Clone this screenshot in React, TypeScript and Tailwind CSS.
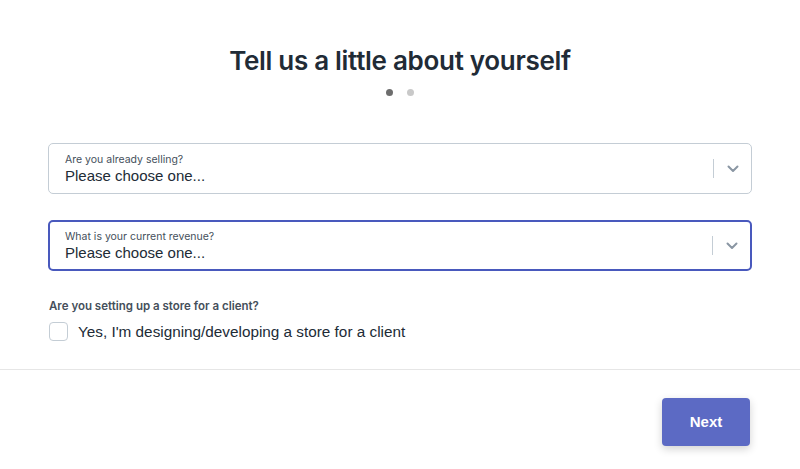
import React, { useState } from 'react';

const Chevron: React.FC = () => (
  <svg width="12" height="8" viewBox="0 0 12 8" fill="none">
    <path d="M1.5 1.5 6 6l4.5-4.5" stroke="#8a96a3" strokeWidth="2" strokeLinecap="round" strokeLinejoin="round" />
  </svg>
);

type SelectProps = { label: string; focused?: boolean };

const SelectField: React.FC<SelectProps> = ({ label, focused }) => (
  <div
    className={`flex h-[51px] items-center rounded-[5px] bg-white ${
      focused ? 'border-2 border-[#4959bd] pl-[15px]' : 'border border-[#c4cdd5] pl-4'
    }`}
  >
    <div className="flex flex-1 flex-col">
      <span className="text-[10.5px] leading-[13px] text-[#454f5b] font-['Inter',sans-serif]">{label}</span>
      <span className="text-[15px] leading-[19px] text-[#212b36] font-['Liberation_Sans',sans-serif]">Please choose one...</span>
    </div>
    <div className="h-[19px] w-px bg-[#c4cdd5]" />
    <div className="flex w-[37px] justify-center">
      <Chevron />
    </div>
  </div>
);

export default function App() {
  const [checked, setChecked] = useState(false);

  return (
    <div className="min-h-[469px] w-[800px] bg-white font-['Inter',sans-serif]">
      <div className="flex flex-col items-center pt-[45px]">
        <h1 className="text-[26px] font-semibold leading-[32px] tracking-[-0.3px] text-[#212b36]">
          Tell us a little about yourself
        </h1>
        <div className="mt-[12px] flex gap-[14px]">
          <span className="h-[7px] w-[7px] rounded-full bg-[#6d6d6d]" />
          <span className="h-[7px] w-[7px] rounded-full bg-[#c9c9c9]" />
        </div>
      </div>

      <div className="mt-[47px] flex flex-col gap-[26px] px-[48px]">
        <SelectField label="Are you already selling?" />
        <SelectField label="What is your current revenue?" focused />
      </div>

      <div className="mt-[28px] px-[49px]">
        <p className="text-[11.5px] font-semibold leading-[14px] text-[#454f5b]">Are you setting up a store for a client?</p>
        <label className="mt-[9px] flex cursor-pointer items-center gap-[10px]">
          <input
            type="checkbox"
            checked={checked}
            onChange={() => setChecked(!checked)}
            className="h-[19px] w-[19px] appearance-none rounded-[4px] border border-[#c4cdd5] bg-white"
          />
          <span className="text-[15.3px] leading-[19px] text-[#212b36] font-['Liberation_Sans',sans-serif]">
            Yes, I'm designing/developing a store for a client
          </span>
        </label>
      </div>

      <div className="mt-[28px] border-t border-[#e6e6e6]" />

      <div className="flex justify-end px-[50px] pt-[28px]">
        <button className="h-[48px] w-[88px] rounded-[4px] bg-[#5c6ac4] text-[15px] font-bold text-white shadow-[0_3px_8px_rgba(0,0,0,0.18)] font-['Liberation_Sans',sans-serif]">
          Next
        </button>
      </div>
    </div>
  );
}
